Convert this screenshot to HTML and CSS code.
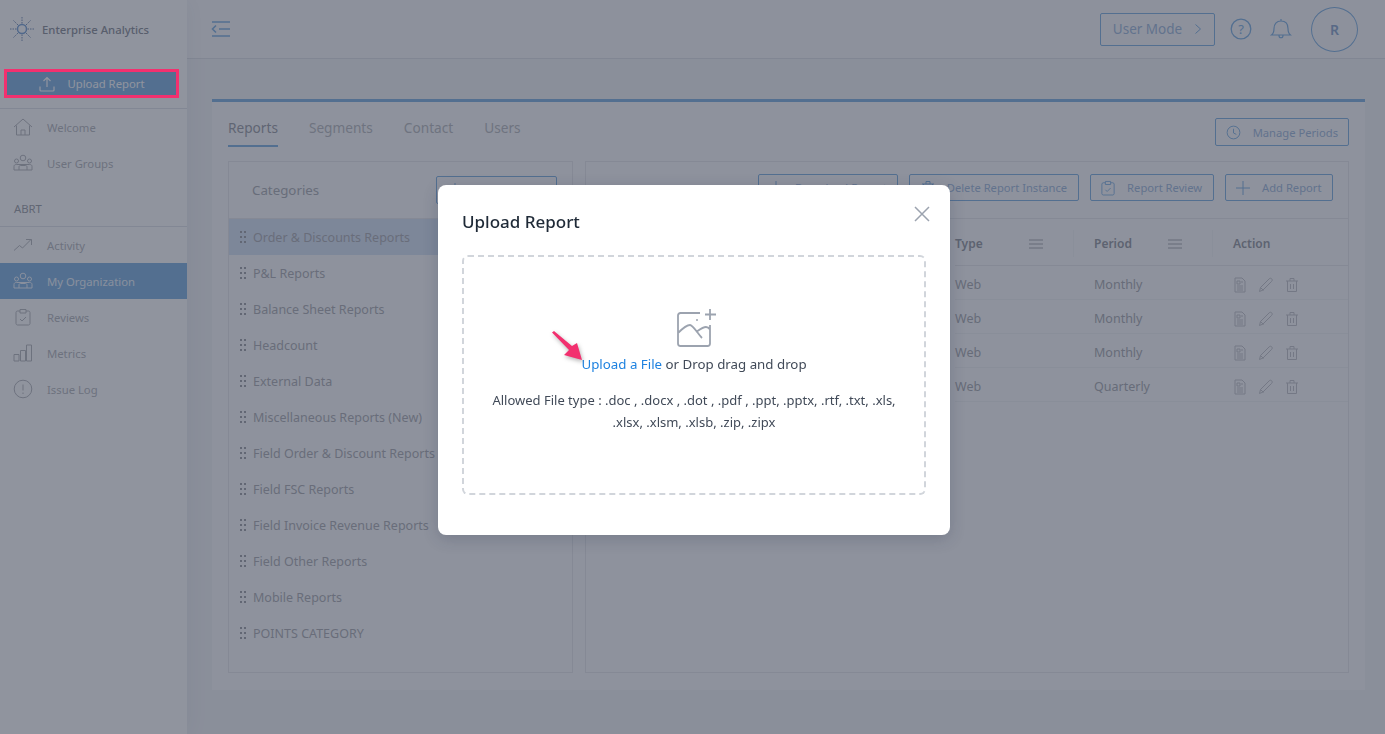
FILE: index.html
```html
<!DOCTYPE html>
<html lang="en">
<head>
    <meta charset="UTF-8">
    <title>Upload Report</title>
    <link rel="stylesheet" href="styles.css">
</head>
<body>
    <svg class="defs" width="0" height="0">
        <symbol id="i-doc" viewBox="0 0 14 16"><path d="M2 1h7l3 3v11H2zM4 4h3v3H4zM4 9h6M4 11h6M4 13h6M8 5h2" fill="none" stroke="currentColor"/></symbol>
        <symbol id="i-pencil" viewBox="0 0 16 16"><path d="M1.500 14.500l1-4L11 2c1-1 2-1 2.700-.2s.8 1.700-.2 2.700l-8.500 8.500zM2.500 10.500l3 3" fill="none" stroke="currentColor"/></symbol>
        <symbol id="i-trash" viewBox="0 0 14 16"><path d="M1 4h12M2.500 4v10.500h9V4M5 4V1.500h4V4M5.500 7v5M8.500 7v5" fill="none" stroke="currentColor"/></symbol>
        <symbol id="i-menu" viewBox="0 0 14 10"><path d="M0 1h14M0 5h14M0 9h14" fill="none" stroke="currentColor"/></symbol>
        <symbol id="i-plus" viewBox="0 0 14 14"><path d="M7 0v14M0 7h14" fill="none" stroke="currentColor"/></symbol>
        <symbol id="i-team" viewBox="0 0 20 18"><circle cx="10" cy="4" r="2.800" fill="none" stroke="currentColor"/><circle cx="3.500" cy="7" r="2" fill="none" stroke="currentColor"/><circle cx="16.500" cy="7" r="2" fill="none" stroke="currentColor"/><path d="M1 16v-3.500c0-1.500 1-2 2.500-2h13c1.500 0 2.500.5 2.500 2V16zM6 16v-3c0-1 .6-1.500 1.500-1.500h5c.9 0 1.500.5 1.500 1.500v3" fill="none" stroke="currentColor"/></symbol>
        <symbol id="i-review" viewBox="0 0 16 18"><path d="M5 3H2.500C1.700 3 1 3.700 1 4.500v11c0 .8.7 1.500 1.500 1.500h11c.8 0 1.500-.7 1.500-1.500v-11c0-.8-.7-1.500-1.500-1.500H11M5 1.500h6V5H5zM5 11l2 2 4-4" fill="none" stroke="currentColor"/></symbol>
        <symbol id="i-dots" viewBox="0 0 6 14"><path d="M0 1h2v2H0zM4 1h2v2H4zM0 6h2v2H0zM4 6h2v2H4zM0 11h2v2H0zM4 11h2v2H4z" fill="currentColor"/></symbol>
    </svg>

    <div class="app">
        <aside class="sidebar">
            <div class="brand">
                <svg class="brand-logo" viewBox="0 0 24 24" width="24" height="24"><g stroke="#7c93b8" stroke-width="1" stroke-dasharray="1.500 1"><path d="M12 0v24M0 12h24M3.500 3.500l17 17M20.500 3.500l-17 17"/></g><circle cx="12" cy="12" r="4.500" fill="#fff" stroke="#7ea6d8" stroke-width="1.500"/></svg>
                <span>Enterprise Analytics</span>
            </div>
            <div class="upload-wrap">
                <button class="upload-btn">
                    <svg viewBox="0 0 16 16" width="16" height="16"><path d="M8 11V1.500M4.500 5L8 1.500 11.500 5M1 10.500V14c0 .6.4 1 1 1h12c.6 0 1-.4 1-1v-3.500" fill="none" stroke="currentColor" stroke-width="1.200"/></svg>
                    Upload Report
                </button>
            </div>
            <nav class="nav">
                <a class="nav-item"><svg viewBox="0 0 20 20" width="20" height="20"><path d="M1 10l9-8 9 8M3.500 8.500V18h13V8.500M8 18v-5h4v5" fill="none" stroke="currentColor"/></svg>Welcome</a>
                <a class="nav-item"><svg width="20" height="18"><use href="#i-team"/></svg>User Groups</a>
            </nav>
            <div class="nav-title">ABRT</div>
            <nav class="nav">
                <a class="nav-item"><svg viewBox="0 0 20 14" width="20" height="14"><path d="M1 12.500l5.500-5 3 2.500 8.500-8.500M13 1.500h5.500V7" fill="none" stroke="currentColor"/></svg>Activity</a>
                <a class="nav-item active"><svg width="20" height="18"><use href="#i-team"/></svg>My Organization</a>
                <a class="nav-item"><svg width="16" height="18" class="shift"><use href="#i-review"/></svg>Reviews</a>
                <a class="nav-item"><svg viewBox="0 0 20 18" width="20" height="18"><path d="M1 10.500h5V17H1zM7.500 6.500h5V17h-5zM13.500 1h5v16h-5z" fill="none" stroke="currentColor"/></svg>Metrics</a>
                <a class="nav-item"><svg viewBox="0 0 20 20" width="20" height="20"><circle cx="10" cy="10" r="8.800" fill="none" stroke="currentColor"/><path d="M10 5.500v6M10 13.500v1.500" stroke="currentColor"/></svg>Issue Log</a>
            </nav>
        </aside>

        <div class="main">
            <header class="topbar">
                <svg class="collapse" viewBox="0 0 20 18" width="20" height="18"><path d="M1 2h18M8 9h11M1 16h18M5 5.500L1.500 9 5 12.500" fill="none" stroke="currentColor" stroke-width="1.600"/></svg>
                <div class="topbar-right">
                    <button class="btn-outline usermode">User Mode <svg viewBox="0 0 8 12" width="8" height="12"><path d="M1.500 1.500L6.500 6l-5 4.500" fill="none" stroke="currentColor"/></svg></button>
                    <svg class="top-icon help" viewBox="0 0 22 22" width="22" height="22"><circle cx="11" cy="11" r="9.800" fill="none" stroke="currentColor" stroke-width="1.300"/><text x="11" y="15.500" text-anchor="middle" class="help-mark">?</text></svg>
                    <svg class="top-icon bell" viewBox="0 0 22 22" width="22" height="22"><path d="M1.500 17c2-1.500 2.500-3 2.500-6.500C4 6 6.500 3 11 3s7 3 7 7.500c0 3.500.5 5 2.500 6.500zM9 17.500c0 3 4 3 4 0M11 1v2" fill="none" stroke="currentColor" stroke-width="1.200"/></svg>
                    <div class="avatar">R</div>
                </div>
            </header>

            <section class="content">
                <div class="panel">
                    <div class="tabs-row">
                        <div class="tabs">
                            <a class="tab active">Reports</a>
                            <a class="tab">Segments</a>
                            <a class="tab">Contact</a>
                            <a class="tab">Users</a>
                        </div>
                        <button class="btn-outline small"><svg viewBox="0 0 16 16" width="15" height="15"><circle cx="8" cy="8" r="6.800" fill="none" stroke="currentColor"/><path d="M8 4v4.500l3 1.500" fill="none" stroke="currentColor"/></svg>Manage Periods</button>
                    </div>
                    <div class="columns">
                        <div class="card categories">
                            <div class="card-head">
                                <span class="card-title">Categories</span>
                                <button class="btn-outline small add-cat"><svg width="14" height="14"><use href="#i-plus"/></svg>Add Category</button>
                            </div>
                            <ul class="cat-list">
                                <li class="selected"><svg width="6" height="14"><use href="#i-dots"/></svg>Order &amp; Discounts Reports</li>
                                <li><svg width="6" height="14"><use href="#i-dots"/></svg>P&amp;L Reports</li>
                                <li><svg width="6" height="14"><use href="#i-dots"/></svg>Balance Sheet Reports</li>
                                <li><svg width="6" height="14"><use href="#i-dots"/></svg>Headcount</li>
                                <li><svg width="6" height="14"><use href="#i-dots"/></svg>External Data</li>
                                <li><svg width="6" height="14"><use href="#i-dots"/></svg>Miscellaneous Reports (New)</li>
                                <li><svg width="6" height="14"><use href="#i-dots"/></svg>Field Order &amp; Discount Reports</li>
                                <li><svg width="6" height="14"><use href="#i-dots"/></svg>Field FSC Reports</li>
                                <li><svg width="6" height="14"><use href="#i-dots"/></svg>Field Invoice Revenue Reports</li>
                                <li><svg width="6" height="14"><use href="#i-dots"/></svg>Field Other Reports</li>
                                <li><svg width="6" height="14"><use href="#i-dots"/></svg>Mobile Reports</li>
                                <li><svg width="6" height="14"><use href="#i-dots"/></svg>POINTS CATEGORY</li>
                            </ul>
                        </div>
                        <div class="card reports">
                            <div class="card-head actions">
                                <button class="btn-outline small"><svg width="14" height="14"><use href="#i-plus"/></svg>Download Report</button>
                                <button class="btn-outline small"><svg width="14" height="16"><use href="#i-trash"/></svg>Delete Report Instance</button>
                                <button class="btn-outline small"><svg width="14" height="16"><use href="#i-review"/></svg>Report Review</button>
                                <button class="btn-outline small"><svg width="14" height="14"><use href="#i-plus"/></svg>Add Report</button>
                            </div>
                            <div class="report-table">
                                <div class="row head">
                                    <div class="type">Type<svg width="14" height="10"><use href="#i-menu"/></svg></div>
                                    <div class="period">Period<svg width="14" height="10"><use href="#i-menu"/></svg></div>
                                    <div class="action">Action</div>
                                </div>
                                <div class="row">
                                    <div class="type">Web</div><div class="period">Monthly</div>
                                    <div class="action icons"><svg width="14" height="16"><use href="#i-doc"/></svg><svg width="16" height="16"><use href="#i-pencil"/></svg><svg width="14" height="16"><use href="#i-trash"/></svg></div>
                                </div>
                                <div class="row">
                                    <div class="type">Web</div><div class="period">Monthly</div>
                                    <div class="action icons"><svg width="14" height="16"><use href="#i-doc"/></svg><svg width="16" height="16"><use href="#i-pencil"/></svg><svg width="14" height="16"><use href="#i-trash"/></svg></div>
                                </div>
                                <div class="row">
                                    <div class="type">Web</div><div class="period">Monthly</div>
                                    <div class="action icons"><svg width="14" height="16"><use href="#i-doc"/></svg><svg width="16" height="16"><use href="#i-pencil"/></svg><svg width="14" height="16"><use href="#i-trash"/></svg></div>
                                </div>
                                <div class="row">
                                    <div class="type">Web</div><div class="period">Quarterly</div>
                                    <div class="action icons"><svg width="14" height="16"><use href="#i-doc"/></svg><svg width="16" height="16"><use href="#i-pencil"/></svg><svg width="14" height="16"><use href="#i-trash"/></svg></div>
                                </div>
                            </div>
                        </div>
                    </div>
                </div>
            </section>
        </div>
    </div>

    <div class="overlay">
        <div class="modal">
            <div class="modal-head">
                <h2>Upload Report</h2>
                <svg class="close" viewBox="0 0 16 16" width="16" height="16"><path d="M1 1l14 14M15 1L1 15" fill="none" stroke="currentColor" stroke-width="1.500"/></svg>
            </div>
            <div class="dropzone">
                <svg class="drop-icon" viewBox="0 0 40 40" width="40" height="40"><path d="M23 5H3.500C2 5 1 6 1 7.500v28C1 37 2 38 3.500 38h27c1.500 0 2.500-1 2.500-2.500V17M1 25c3-3 8-8 12-8 3 0 8 9 12 13M19 24c3-2 7-5 10-5 1.500 0 3 1 4 2.500M33 1v11M28 6.500h11" fill="none" stroke="currentColor" stroke-width="1.800"/><circle cx="20" cy="12" r="1" fill="currentColor"/></svg>
                <p class="drop-line"><a class="file-link">Upload a File</a> or Drop drag and drop</p>
                <p class="drop-types">Allowed File type : .doc , .docx , .dot , .pdf , .ppt, .pptx, .rtf, .txt, .xls, .xlsx, .xlsm, .xlsb, .zip, .zipx</p>
            </div>
        </div>
    </div>

    <!-- callouts drawn on top of the screenshot -->
    <div class="callout-box"></div>
    <svg class="callout-arrow" viewBox="0 0 34 32" width="34" height="32"><path d="M1 2.500L3 1l18 15 5-3 5 17-18-5 5-5z" fill="#f2306f"/></svg>
</body>
</html>
```

FILE: styles.css
```css
* {
    box-sizing: border-box;
    margin: 0;
    padding: 0;
}

html, body {
    height: 100%;
    overflow: hidden;
}

body {
    background: #f3f4f7;
    color: #b4b6bb;
    font-family: "Noto Sans", "Open Sans", sans-serif;
    font-size: 13px;
}

button {
    font-family: inherit;
    background: none;
}

.defs {
    position: absolute;
}

.app {
    display: flex;
    height: 734px;
}

/* sidebar */
.sidebar {
    width: 187px;
    flex-shrink: 0;
    background: #ffffff;
    box-shadow: 3px 0 20px rgba(40, 50, 70, 0.05);
    position: relative;
}

.brand {
    height: 58px;
    display: flex;
    align-items: center;
    gap: 8px;
    padding-left: 10px;
    color: #8f929b;
    font-size: 11.300px;
    font-weight: 500;
}

.upload-wrap {
    padding: 13px 7px 12px;
    border-bottom: 1px solid #e3e5ea;
}

.upload-btn {
    width: 170px;
    height: 25px;
    border: 0;
    background: #84b4e3;
    color: #ffffff;
    font-size: 11.300px;
    display: flex;
    align-items: center;
    justify-content: center;
    gap: 12px;
}

.nav {
    display: flex;
    flex-direction: column;
}

.nav-item {
    height: 36px;
    display: flex;
    align-items: center;
    gap: 14px;
    padding-left: 13px;
    color: #b9babf;
    font-size: 11.300px;
}

.nav-item svg {
    flex-shrink: 0;
}

.nav-item .shift {
    margin: 0 2px;
}

.nav-item.active {
    background: #84b4e3;
    color: #eef5fd;
}

.nav-title {
    margin-top: 11px;
    height: 35px;
    padding: 9px 0 0 14px;
    color: #9fa2a9;
    font-size: 11.300px;
    border-bottom: 1px solid #e3e5ea;
}

/* header */
.main {
    flex: 1;
    min-width: 0;
}

.topbar {
    height: 59px;
    background: #f9f9fb;
    border-bottom: 1px solid #e1e3e8;
    display: flex;
    align-items: center;
    justify-content: space-between;
    padding: 0 27px 0 24px;
}

.collapse {
    color: #84b4e3;
}

.topbar-right {
    display: flex;
    align-items: center;
}

.top-icon {
    color: #84b4e3;
}

.top-icon.help {
    margin-left: 15px;
}

.top-icon.bell {
    margin-left: 18px;
}

.help-mark {
    fill: currentColor;
    font-size: 13px;
    font-family: "Noto Sans", sans-serif;
}

.btn-outline {
    border: 1px solid #84b4e3;
    border-radius: 2px;
    color: #a3bcdc;
    display: inline-flex;
    align-items: center;
    gap: 12px;
    white-space: nowrap;
}

.btn-outline svg {
    color: #84b4e3;
    flex-shrink: 0;
}

.usermode {
    width: 115px;
    height: 33px;
    justify-content: center;
    font-size: 13.500px;
}

.avatar {
    width: 47px;
    height: 45px;
    margin-left: 19px;
    border: 1px solid #84b4e3;
    border-radius: 50%;
    display: flex;
    align-items: center;
    justify-content: center;
    color: #8fa9cf;
    font-size: 14px;
    font-weight: 600;
}

/* page */
.content {
    padding: 40px 20px 0 25px;
}

.panel {
    height: 591px;
    background: #fbfbfc;
    border-top: 3px solid #84b4e3;
    padding: 0 16px;
}

.tabs-row {
    height: 59px;
    display: flex;
    justify-content: space-between;
    align-items: flex-start;
    padding-top: 16px;
}

.tabs {
    display: flex;
    gap: 31px;
}

.tab {
    height: 29px;
    font-size: 13.650px;
    line-height: 19px;
    color: #bcbdc2;
}

.tab.active {
    color: #9ea1a9;
    border-bottom: 2px solid #84b4e3;
}

.btn-outline.small {
    height: 28px;
    padding: 0 10px;
    font-size: 11.200px;
}

.columns {
    display: flex;
    gap: 12px;
    height: 512px;
}

.card {
    border: 1px solid #e8e9ed;
    background: #fbfbfc;
}

.categories {
    width: 345px;
    flex-shrink: 0;
}

.reports {
    flex: 1;
    min-width: 0;
}

.card-head {
    height: 57px;
    border-bottom: 1px solid #e8e9ed;
    display: flex;
    align-items: center;
    justify-content: space-between;
    padding: 0 15px 0 23px;
}

.card-title {
    font-size: 13.300px;
    color: #aeb0b7;
}

.add-cat {
    width: 121px;
    justify-content: center;
}

.cat-list {
    list-style: none;
}

.cat-list li {
    height: 36px;
    display: flex;
    align-items: center;
    gap: 7px;
    padding-left: 11px;
    font-size: 12.500px;
    color: #b0b1b7;
    white-space: nowrap;
}

.cat-list li.selected {
    background: #d9e4f5;
}

.cat-list svg {
    color: #a3a5ab;
    flex-shrink: 0;
}

.actions {
    justify-content: flex-end;
    align-items: flex-start;
    gap: 11px;
    padding-top: 12px;
    padding-right: 15px;
}

.actions .btn-outline.small {
    height: 27px;
    padding: 0 10.500px;
}

.report-table {
    padding-left: 369px;
}

.row {
    display: flex;
    height: 34px;
    align-items: center;
    padding-top: 4px;
    color: #acaeb4;
    border-bottom: 1px solid #f1f2f5;
    font-size: 12.500px;
}

.row.head {
    height: 47px;
    padding-top: 3px;
    color: #999ca4;
    font-weight: 600;
    font-size: 12px;
    border-bottom: 1px solid #e8e9ed;
}

.row .type, .row .period {
    width: 119px;
    margin-right: 20px;
    display: flex;
    align-items: center;
    justify-content: space-between;
    padding-right: 30px;
}

.row.head .type, .row.head .period {
    height: 27px;
    border-right: 1px solid #f3f4f6;
}

.row .type svg, .row .period svg {
    color: #a8aab0;
}

.icons {
    display: flex;
    align-items: center;
    gap: 11px;
    color: #c6c7cc;
}

/* modal */
.overlay {
    position: fixed;
    inset: 0;
    background: rgba(33, 41, 62, 0.5);
    padding: 185px 0 0 438px;
}

.modal {
    width: 512px;
    height: 350px;
    background: #ffffff;
    border-radius: 8px;
    box-shadow: 0 4px 16px rgba(29, 41, 71, 0.2);
    padding: 0 24px;
}

.modal-head {
    height: 70px;
    display: flex;
    justify-content: space-between;
    padding-top: 23px;
}

.modal-head h2 {
    font-size: 17px;
    font-weight: 500;
    line-height: 27px;
    color: #1f2a37;
}

.close {
    color: #9ca3af;
    margin: -2px -4px 0 0;
}

.dropzone {
    height: 240px;
    border: 2px dashed #d1d5db;
    border-radius: 6px;
    display: flex;
    flex-direction: column;
    align-items: center;
    padding-top: 51px;
    text-align: center;
}

.drop-icon {
    color: #9ca3af;
    margin-left: 5px;
}

.drop-line {
    margin-top: 6px;
    line-height: 20px;
    color: #414a58;
    font-size: 13.300px;
}

.file-link {
    color: #1e82e0;
}

.drop-types {
    margin-top: 15px;
    padding: 0 24px;
    line-height: 22px;
    font-size: 13px;
    color: #414a58;
}

/* callouts */
.callout-box {
    position: fixed;
    left: 4px;
    top: 69px;
    width: 175px;
    height: 29px;
    border: 3px solid #f2306f;
}

.callout-arrow {
    position: fixed;
    left: 551px;
    top: 330px;
    filter: drop-shadow(1px 2px 2px rgba(0, 0, 0, 0.3));
}
```
